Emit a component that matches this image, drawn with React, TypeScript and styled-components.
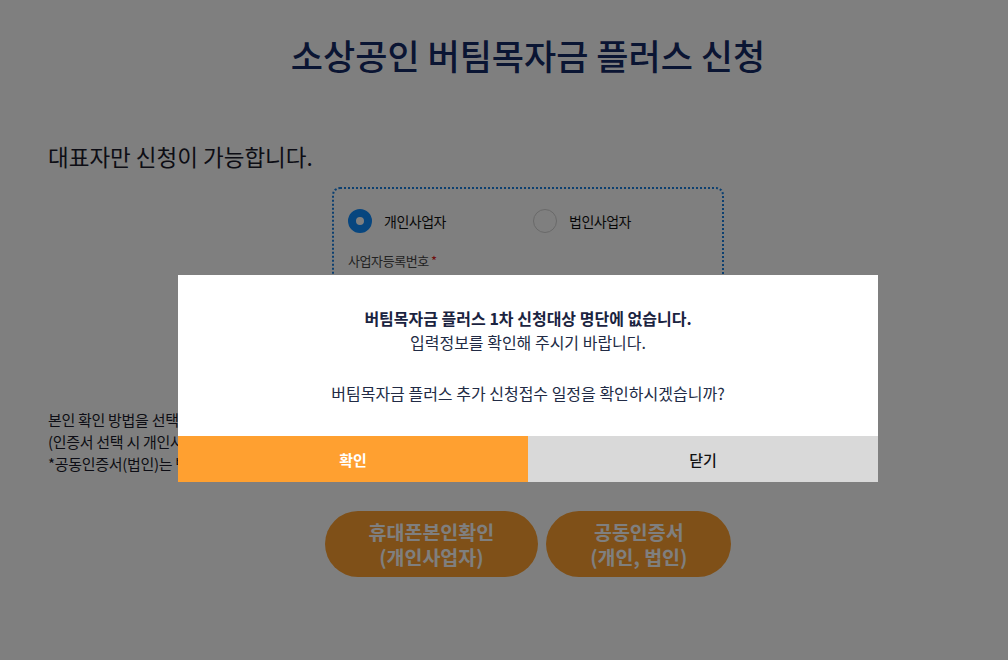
import React from "react";
import styled, { createGlobalStyle } from "styled-components";

const GlobalStyle = createGlobalStyle`
  html, body {
    margin: 0;
    padding: 0;
    background: #ffffff;
    font-family: "Noto Sans CJK KR", "Noto Sans", sans-serif;
    color: #222;
  }
  * { box-sizing: border-box; }
`;

const Page = styled.div`
  width: 960px;
  margin-left: 48px;
  height: 660px;
  overflow: hidden;
  display: flex;
  flex-direction: column;
`;

const Title = styled.h1`
  margin: 32px 0 0;
  font-size: 35px;
  line-height: 45px;
  font-weight: 500;
  color: #152a66;
  text-align: center;
`;

const Notice = styled.h2`
  margin: 64px 0 0;
  font-size: 22.5px;
  line-height: 30px;
  font-weight: 400;
  color: #1a1a2a;
`;

const FormBox = styled.div`
  align-self: center;
  width: 392px;
  margin-top: 16px;
  padding: 20px 14px 35px;
  border: 2px dotted #1a80e0;
  border-radius: 8px;
`;

const RadioRow = styled.div`
  display: flex;
`;

const RadioOption = styled.label`
  flex: 0 0 185px;
  display: flex;
  align-items: center;
  gap: 12px;
  font-size: 14px;
  letter-spacing: -0.5px;
  color: #111;
`;

const RadioMark = styled.span<{ $checked?: boolean }>`
  width: 24px;
  height: 24px;
  border-radius: 50%;
  flex-shrink: 0;
  background: #fff;
  border: ${(p) => (p.$checked ? "8px solid #0f8cff" : "1px solid #d2d2d2")};
`;

const FieldLabel = styled.div`
  margin-top: 18px;
  font-size: 13px;
  line-height: 20px;
  letter-spacing: -0.4px;
  color: #444;
  span {
    color: #e02020;
    margin-left: 2px;
  }
`;

const FieldInput = styled.input`
  margin-top: 8px;
  width: 100%;
  height: 48px;
  border: 1px solid #ccc;
  border-radius: 4px;
  padding: 0 12px;
  font-size: 14px;
  font-family: inherit;
`;

const FieldHelp = styled.div`
  margin-top: 8px;
  font-size: 12px;
  line-height: 18px;
  color: #777;
`;

const Guide = styled.div`
  margin-top: 19px;
  font-size: 15px;
  line-height: 22px;
  letter-spacing: -0.3px;
  color: #1a1a2a;
`;

const ChoiceRow = styled.div`
  display: flex;
  justify-content: center;
  gap: 8px;
  margin-top: 36px;
`;

const ChoiceButton = styled.button`
  height: 66px;
  padding: 0 44px;
  border: none;
  border-radius: 33px;
  background: #ffa030;
  color: #fff;
  font-family: inherit;
  font-size: 19.5px;
  line-height: 25px;
  font-weight: 700;
`;

const Overlay = styled.div`
  position: fixed;
  inset: 0;
  background: rgba(0, 0, 0, 0.5);
  display: flex;
  justify-content: center;
  align-items: flex-start;
  padding: 275px 0 0 48px;
`;

const Modal = styled.div`
  width: 700px;
  background: #fff;
  display: flex;
  flex-direction: column;
`;

const ModalBody = styled.div`
  padding: 31px 20px;
  text-align: center;
  font-size: 16px;
  line-height: 24px;
  color: #222b45;
`;

const Strong = styled.p`
  margin: 0;
  font-weight: 700;
  color: #1a2340;
`;

const Line = styled.p<{ $gap?: boolean }>`
  margin: ${(p) => (p.$gap ? "27px 0 0" : "0")};
`;

const ModalActions = styled.div`
  display: grid;
  grid-template-columns: 1fr 1fr;
`;

const ModalButton = styled.button<{ $primary?: boolean }>`
  height: 46px;
  border: none;
  font-family: inherit;
  font-size: 15px;
  font-weight: ${(p) => (p.$primary ? 700 : 500)};
  background: ${(p) => (p.$primary ? "#ffa030" : "#d9d9d9")};
  color: ${(p) => (p.$primary ? "#fff" : "#111")};
`;

export default function App() {
  return (
    <>
      <GlobalStyle />
      <Page>
        <Title>소상공인 버팀목자금 플러스 신청</Title>
        <Notice>대표자만 신청이 가능합니다.</Notice>
        <FormBox>
          <RadioRow>
            <RadioOption>
              <RadioMark $checked />
              개인사업자
            </RadioOption>
            <RadioOption>
              <RadioMark />
              법인사업자
            </RadioOption>
          </RadioRow>
          <FieldLabel>
            사업자등록번호<span>*</span>
          </FieldLabel>
          <FieldInput placeholder="- 없이 숫자만 입력" />
          <FieldHelp>※ 사업자등록번호 10자리를 입력해 주세요.</FieldHelp>
        </FormBox>
        <Guide>
          본인 확인 방법을 선택해 주세요.
          <br />
          (인증서 선택 시 개인사업자는 개인 공동인증서로 확인합니다.)
          <br />
          *공동인증서(법인)는 법인사업자만 사용할 수 있습니다.
        </Guide>
        <ChoiceRow>
          <ChoiceButton>
            휴대폰본인확인
            <br />
            (개인사업자)
          </ChoiceButton>
          <ChoiceButton>
            공동인증서
            <br />
            (개인, 법인)
          </ChoiceButton>
        </ChoiceRow>
      </Page>
      <Overlay>
        <Modal>
          <ModalBody>
            <Strong>버팀목자금 플러스 1차 신청대상 명단에 없습니다.</Strong>
            <Line>입력정보를 확인해 주시기 바랍니다.</Line>
            <Line $gap>버팀목자금 플러스 추가 신청접수 일정을 확인하시겠습니까?</Line>
          </ModalBody>
          <ModalActions>
            <ModalButton $primary>확인</ModalButton>
            <ModalButton>닫기</ModalButton>
          </ModalActions>
        </Modal>
      </Overlay>
    </>
  );
}
